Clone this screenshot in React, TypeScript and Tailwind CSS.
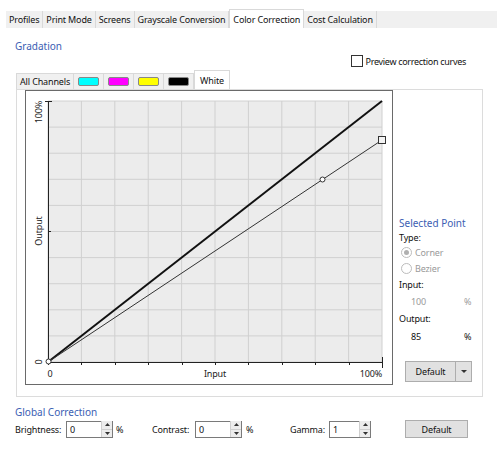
import React from "react";

const xs = Array.from({ length: 11 }, (_, i) => 22 + i * 33.4);
const ys = Array.from({ length: 11 }, (_, i) => 10 + i * 26.1);

function Chart() {
  return (
    <svg width="366" height="293" viewBox="0 0 366 293" className="block">
      <rect x="22" y="10" width="334" height="261" fill="#ececec" />
      {xs.map((x, i) => (
        <line key={"v" + i} x1={x} y1="10" x2={x} y2="271" stroke="#d0d0d0" strokeWidth="1" />
      ))}
      {ys.map((y, i) => (
        <line key={"h" + i} x1="22" y1={y} x2="356" y2={y} stroke="#d0d0d0" strokeWidth="1" />
      ))}
      <line x1="22.5" y1="10" x2="22.5" y2="271" stroke="#222" strokeWidth="1" />
      <line x1="19" y1="10.5" x2="26" y2="10.5" stroke="#222" strokeWidth="1" />
      <line x1="22" y1="140.5" x2="25" y2="140.5" stroke="#222" strokeWidth="1" />
      <line x1="22" y1="271.5" x2="356" y2="271.5" stroke="#222" strokeWidth="1" />
      {xs.map((x, i) => (
        <line key={"t" + i} x1={Math.round(x) + 0.5} y1="271" x2={Math.round(x) + 0.5} y2="274" stroke="#222" strokeWidth="1" />
      ))}
      <line x1="356.5" y1="266" x2="356.5" y2="277" stroke="#222" strokeWidth="1" />
      <line x1="22" y1="271" x2="356" y2="10" stroke="#111" strokeWidth="2" />
      <line x1="22" y1="271" x2="356" y2="49" stroke="#333" strokeWidth="1" />
      <circle cx="22.5" cy="270.5" r="2.5" fill="#fff" stroke="#333" strokeWidth="1" />
      <circle cx="296.5" cy="88.5" r="2.5" fill="#fff" stroke="#333" strokeWidth="1" />
      <rect x="352.5" y="45.5" width="7" height="7" fill="#f4f4f4" stroke="#333" strokeWidth="1" />
      <text x="14" y="10" transform="rotate(-90 14 10)" textAnchor="end" dominantBaseline="middle" fontSize="9" fill="#222">100%</text>
      <text x="14" y="140" transform="rotate(-90 14 140)" textAnchor="middle" dominantBaseline="middle" fontSize="9" fill="#222">Output</text>
      <text x="14" y="271" transform="rotate(-90 14 271)" textAnchor="middle" dominantBaseline="middle" fontSize="9" fill="#222">0</text>
      <text x="24" y="286" textAnchor="middle" fontSize="9" fill="#222">0</text>
      <text x="189" y="286" textAnchor="middle" fontSize="9" fill="#222">Input</text>
      <text x="356" y="286" textAnchor="end" fontSize="9" fill="#222">100%</text>
    </svg>
  );
}

function Spin() {
  return (
    <div className="flex flex-col w-[11px] h-[16px] border-l border-[#cfcfcf]">
      <div className="flex-1 flex items-center justify-center bg-[#ececec] border-b border-[#cfcfcf]">
        <svg width="5" height="3" viewBox="0 0 5 3"><path d="M0 3 L2.5 0 L5 3 Z" fill="#333" /></svg>
      </div>
      <div className="flex-1 flex items-center justify-center bg-[#ececec]">
        <svg width="5" height="3" viewBox="0 0 5 3"><path d="M0 0 L2.5 3 L5 0 Z" fill="#333" /></svg>
      </div>
    </div>
  );
}

function NumInput({ value, w }: { value: string; w: string }) {
  return (
    <div className={`flex items-center h-[17px] border border-[#7a7a7a] bg-white ${w}`}>
      <span className="flex-1 pl-[3px] leading-none">{value}</span>
      <Spin />
    </div>
  );
}

export default function App() {
  const tabs = ["Profiles", "Print Mode", "Screens", "Grayscale Conversion", "Color Correction", "Cost Calculation"];
  return (
    <div className="w-[497px] h-[455px] bg-white text-[9px] tracking-[-0.15px] text-[#111] overflow-hidden font-['Noto_Sans',sans-serif] leading-none">
      {/* top tabs */}
      <div className="mt-[11px] ml-[6px] h-[17px] bg-[#f0f0f0] flex">
        {tabs.map((t) =>
          t === "Color Correction" ? (
            <div key={t} className="-mt-[2px] h-[19px] px-[3px] flex items-center bg-white border border-b-0 border-[#d9d9d9]">
              {t}
            </div>
          ) : (
            <div key={t} className="h-[17px] px-[3px] flex items-center border-r border-[#d9d9d9]">
              {t}
            </div>
          )
        )}
      </div>

      <div className="mt-[13px] ml-[15px] text-[10px] tracking-normal text-[#3b60b3]">Gradation</div>

      <div className="mt-[4px] flex justify-end pr-[31px] items-center gap-[3px]">
        <div className="w-[12px] h-[12px] border border-[#333] bg-white" />
        <span className="tracking-[-0.3px]">Preview correction curves</span>
      </div>

      {/* channel tabs */}
      <div className="mt-[3px] ml-[16px] flex items-end h-[19px]">
        <div className="h-[16px] px-[3px] flex items-center bg-[#f0f0f0] border border-b-0 border-[#d9d9d9]">All Channels</div>
        {["#00ffff", "#ff00ff", "#ffff00", "#000000"].map((c) => (
          <div key={c} className="h-[16px] px-[4px] flex items-center bg-[#f0f0f0] border-r border-t border-[#d9d9d9]">
            <div className="w-[21px] h-[9px] rounded-[2px] border border-[#888]" style={{ backgroundColor: c }} />
          </div>
        ))}
        <div className="h-[19px] px-[5px] flex items-center bg-white border border-b-0 border-[#d9d9d9]">White</div>
      </div>

      {/* panel */}
      <div className="ml-[16px] w-[467px] h-[308px] border border-[#dcdcdc] flex">
        <div className="ml-[8px] w-[368px] h-[295px] border border-[#6a6a6a]">
          <Chart />
        </div>
        <div className="flex-1 flex flex-col pl-[6px] pb-[14px] justify-end">
          <div className="text-[10px] tracking-normal text-[#3b60b3]">Selected Point</div>
          <div className="mt-[5px]">Type:</div>
          <div className="mt-[3px] ml-[2px] flex items-center gap-[3px] text-[#9a9a9a] h-[14px]">
            <div className="w-[11px] h-[11px] rounded-full border border-[#bcbcbc] flex items-center justify-center">
              <div className="w-[5px] h-[5px] rounded-full bg-[#b0b0b0]" />
            </div>
            Corner
          </div>
          <div className="mt-[2px] ml-[2px] flex items-center gap-[3px] text-[#9a9a9a] h-[14px]">
            <div className="w-[11px] h-[11px] rounded-full border border-[#bcbcbc]" />
            Bezier
          </div>
          <div className="mt-[5px]">Input:</div>
          <div className="mt-[8px] flex text-[#9a9a9a]">
            <span className="ml-[12px] w-[53px]">100</span>
            <span>%</span>
          </div>
          <div className="mt-[8px]">Output:</div>
          <div className="mt-[9px] flex">
            <span className="ml-[12px] w-[53px]">85</span>
            <span>%</span>
          </div>
          <div className="mt-[20px] ml-[6px] flex h-[21px] w-[67px] border border-[#adadad] bg-[#e1e1e1]">
            <div className="flex-1 flex items-center justify-center border-r border-[#adadad]">Default</div>
            <div className="w-[15px] flex items-center justify-center">
              <svg width="6" height="3" viewBox="0 0 6 3"><path d="M0 0 L3 3 L6 0 Z" fill="#333" /></svg>
            </div>
          </div>
        </div>
      </div>

      <div className="mt-[10px] ml-[15px] text-[10px] tracking-normal text-[#3b60b3]">Global Correction</div>
      <div className="mt-[3px] ml-[15px] flex items-center">
        <span className="w-[51px]">Brightness:</span>
        <NumInput value="0" w="w-[47px]" />
        <span className="ml-[3px] w-[36px]">%</span>
        <span className="w-[43px]">Contrast:</span>
        <NumInput value="0" w="w-[47px]" />
        <span className="ml-[4px] w-[44px]">%</span>
        <span className="w-[39px]">Gamma:</span>
        <NumInput value="1" w="w-[42px]" />
        <div className="ml-[34px] w-[63px] h-[18px] flex items-center justify-center border border-[#adadad] bg-[#e1e1e1]">Default</div>
      </div>
    </div>
  );
}
